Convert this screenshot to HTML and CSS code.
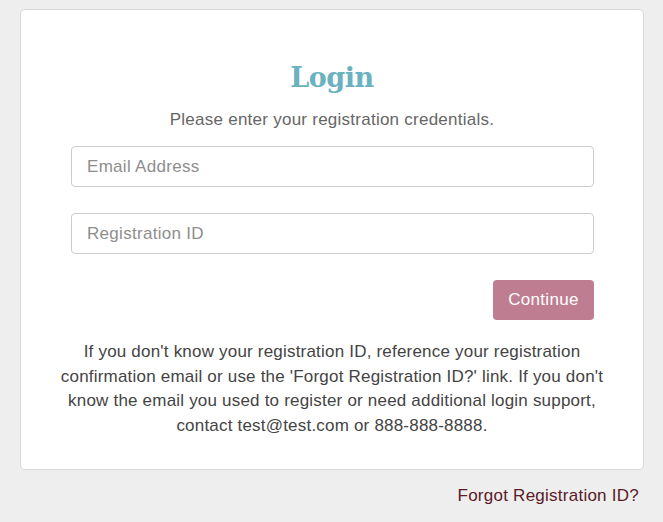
FILE: index.html
```html
<!DOCTYPE html>
<html>
<head>
<meta charset="utf-8">
<link rel="stylesheet" href="styles.css">
</head>
<body>
<div class="page">
  <div class="card">
    <h1 class="title">Login</h1>
    <p class="subtitle">Please enter your registration credentials.</p>
    <form class="form">
      <input class="field" type="text" placeholder="Email Address">
      <input class="field" type="text" placeholder="Registration ID">
      <div class="actions">
        <button class="btn" type="button">Continue</button>
      </div>
    </form>
    <p class="help">If you don't know your registration ID, reference your registration confirmation email or use the 'Forgot Registration ID?' link. If you don't know the email you used to register or need additional login support, contact test@test.com or 888-888-8888.</p>
  </div>
  <div class="footer">
    <a class="forgot" href="#">Forgot Registration ID?</a>
  </div>
</div>
</body>
</html>
```

FILE: styles.css
```css
html, body {
  margin: 0;
  padding: 0;
  background: #eeeeee;
  font-family: "Liberation Sans", Arial, sans-serif;
}
.page {
  padding: 9px 19px 0 20px;
}
.card {
  background: #ffffff;
  border: 1px solid #d9d9d9;
  border-radius: 5px;
  padding: 50px 38px 31px 38px;
  text-align: center;
}
.title {
  margin: 0;
  font-family: "DejaVu Serif", Georgia, serif;
  font-weight: bold;
  font-size: 27px;
  line-height: 36px;
  letter-spacing: -0.5px;
  color: #6ab2bf;
}
.subtitle {
  margin: 14px 0 0 0;
  font-size: 17px;
  letter-spacing: 0.25px;
  line-height: 20px;
  color: #666666;
}
.form {
  margin: 16px 11px 0 12px;
  display: flex;
  flex-direction: column;
}
.field {
  box-sizing: border-box;
  height: 41px;
  margin: 0 0 26px 0;
  padding: 0 15px;
  border: 1px solid #cccccc;
  border-radius: 4px;
  font-family: "Liberation Sans", Arial, sans-serif;
  font-size: 17px;
  letter-spacing: 0.3px;
  color: #333;
  outline: none;
}
.field::placeholder {
  color: #8e8e8e;
}
.actions {
  display: flex;
  justify-content: flex-end;
}
.btn {
  height: 40px;
  width: 101px;
  padding: 0;
  border: none;
  border-radius: 4px;
  background: #bf7d91;
  color: #ffffff;
  font-family: "Liberation Sans", Arial, sans-serif;
  font-size: 17px;
  letter-spacing: 0.3px;
}
.help {
  margin: 20px -4px 0 -4px;
  font-size: 17px;
  letter-spacing: 0.2px;
  line-height: 24.6px;
  color: #444444;
}
.footer {
  display: flex;
  justify-content: flex-end;
  padding: 16px 5px 0 0;
}
.forgot {
  font-size: 17px;
  letter-spacing: 0.25px;
  color: #5b1a28;
  text-decoration: none;
}
```
